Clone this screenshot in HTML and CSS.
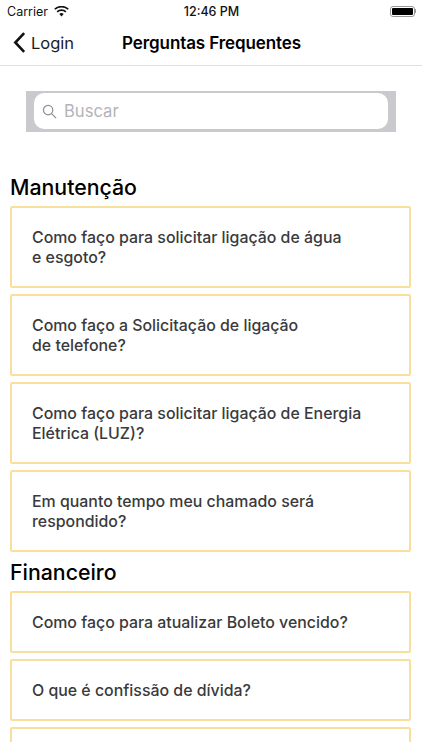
FILE: index.html
```html
<!DOCTYPE html>
<html lang="pt">
<head>
<meta charset="utf-8">
<title>Perguntas Frequentes</title>
<link rel="stylesheet" href="styles.css">
</head>
<body>
<div class="screen">
  <div class="status">
    <div class="status-left">
      <span>Carrier</span>
      <svg class="wifi" viewBox="0 0 16 12"><path d="M8 11.5 5.6 8.8a3.5 3.5 0 0 1 4.8 0ZM3.9 7 2.6 5.6a8 8 0 0 1 10.8 0L12.100 7a6 6 0 0 0-8.200 0ZM1.300 4.200 0 2.900a11.800 11.800 0 0 1 16 0l-1.300 1.300a10 10 0 0 0-13.400 0Z"/></svg>
    </div>
    <div class="status-time">12:46 PM</div>
    <div class="status-right">
      <span class="battery"><span class="battery-fill"></span></span><span class="battery-cap"></span>
    </div>
  </div>
  <header class="nav">
    <div class="back">
      <svg class="chevron" viewBox="0 0 14 24"><path d="M12 2 2.500 12 12 22" /></svg>
      <span>Login</span>
    </div>
    <h1 class="nav-title">Perguntas Frequentes</h1>
  </header>
  <main class="content">
    <div class="search">
      <div class="search-field">
        <svg class="search-icon" viewBox="0 0 16 16"><circle cx="6.500" cy="6.500" r="5"/><path d="m10.200 10.200 4.800 4.800"/></svg>
        <span>Buscar</span>
      </div>
    </div>
    <section class="group group-first">
      <h2>Manutenção</h2>
      <div class="cards">
        <div class="card">Como faço para solicitar ligação de água<br>e esgoto?</div>
        <div class="card">Como faço a Solicitação de ligação<br>de telefone?</div>
        <div class="card">Como faço para solicitar ligação de Energia<br>Elétrica (LUZ)?</div>
        <div class="card">Em quanto tempo meu chamado será<br>respondido?</div>
      </div>
    </section>
    <section class="group">
      <h2>Financeiro</h2>
      <div class="cards">
        <div class="card card-short">Como faço para atualizar Boleto vencido?</div>
        <div class="card card-short">O que é confissão de dívida?</div>
        <div class="card card-short"></div>
      </div>
    </section>
  </main>
</div>
</body>
</html>
```
FILE: styles.css
```css
* { box-sizing: border-box; }
html, body { margin: 0; padding: 0; background: #fff; }
body { font-family: Inter, "Liberation Sans", sans-serif; color: #000; }
.screen { width: 422px; height: 750px; overflow: hidden; display: flex; flex-direction: column; }
.status { height: 22px; flex: none; display: grid; grid-template-columns: 1fr auto 1fr; align-items: center; padding: 0 6px 0 7px; font-size: 12.500px; color: #111; }
.status-left { display: flex; align-items: center; gap: 6px; }
.wifi { width: 15px; height: 11px; fill: #111; }
.status-time { font-weight: 500; font-size: 12.500px; }
.status-right { display: flex; justify-content: flex-end; align-items: center; }
.battery { width: 25px; height: 11px; border: 1px solid #999; border-radius: 3px; padding: 1px; display: block; }
.battery-fill { display: block; height: 100%; background: #000; border-radius: 1px; }
.battery-cap { width: 1.500px; height: 4px; background: #999; }
.nav { height: 44px; flex: none; display: flex; align-items: center; border-bottom: 1px solid #e0e0e2; padding: 0 0 2px 13px; gap: 48px; }
.back { display: flex; align-items: center; gap: 5px; font-size: 16.500px; color: #1c1c1e; }
.chevron { width: 13px; height: 23px; fill: none; stroke: #111; stroke-width: 2.800; }
.nav-title { margin: 0; font-size: 17px; font-weight: 600; letter-spacing: -0.100px; }
.content { flex: 1; min-height: 0; overflow: hidden; padding: 25px 11px 0 10px; margin-bottom: 8px; }
.search { margin: 0 15px 0 16px; height: 41px; background: #c9c9ce; padding: 2px 8px; }
.search-field { height: 36px; background: #fff; border-radius: 10px; display: flex; align-items: center; padding-left: 8px; gap: 7px; font-size: 16.600px; color: #b4b4b8; }
.search-icon { width: 15px; height: 15px; fill: none; stroke: #8e8e93; stroke-width: 1.300; }
.group { margin-top: 8px; }
.group-first { margin-top: 43px; }
.group h2 { margin: 0 0 7px; font-size: 21.300px; line-height: 24px; font-weight: 500; color: #000; }
.cards { display: flex; flex-direction: column; gap: 6px; }
.card { height: 82px; display: flex; align-items: center; padding: 2px 20px 0; border: 2px solid #f8e09c; border-radius: 2px; font-size: 15.900px; line-height: 20px; font-weight: 500; color: #3a3a3c; background: #fff; }
.card-short { height: 62px; }
```
